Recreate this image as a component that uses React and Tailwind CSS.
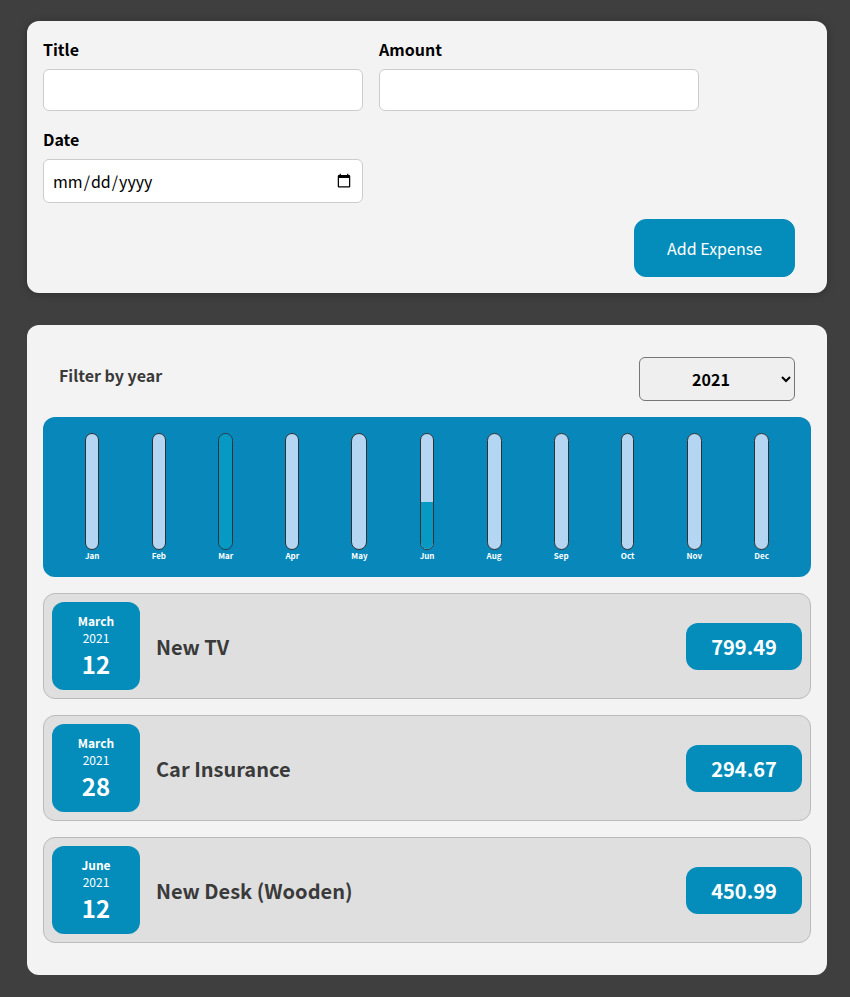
const months = [
  { label: "Jan", fill: 0 },
  { label: "Feb", fill: 0 },
  { label: "Mar", fill: 100 },
  { label: "Apr", fill: 0 },
  { label: "May", fill: 0 },
  { label: "Jun", fill: 41 },
  { label: "Aug", fill: 0 },
  { label: "Sep", fill: 0 },
  { label: "Oct", fill: 0 },
  { label: "Nov", fill: 0 },
  { label: "Dec", fill: 0 },
];

const expenses = [
  { month: "March", year: "2021", day: "12", title: "New TV", amount: "799.49" },
  { month: "March", year: "2021", day: "28", title: "Car Insurance", amount: "294.67" },
  { month: "June", year: "2021", day: "12", title: "New Desk (Wooden)", amount: "450.99" },
];

function Field({ id, label, type, height }) {
  return (
    <div className="w-80">
      <label htmlFor={id} className="mb-2 block text-base font-bold">
        {label}
      </label>
      <input
        id={id}
        type={type}
        className={`${height} block w-full rounded-md border border-[#cccccc] bg-white px-2 text-base`}
      />
    </div>
  );
}

function ExpenseForm() {
  return (
    <form className="rounded-xl bg-[#f3f3f3] p-4 shadow-[0_1px_8px_rgba(0,0,0,0.25)]" onSubmit={(e) => e.preventDefault()}>
      <div className="flex flex-wrap gap-4">
        <Field id="title" label="Title" type="text" height="h-[42px]" />
        <Field id="amount" label="Amount" type="number" height="h-[42px]" />
        <Field id="date" label="Date" type="date" height="h-11" />
      </div>
      <div className="mt-4 flex justify-end pr-4">
        <button type="submit" className="rounded-xl border border-[#048dba] bg-[#048dba] px-8 py-4 text-base text-white">
          Add Expense
        </button>
      </div>
    </form>
  );
}

function Chart() {
  return (
    <div className="flex h-40 justify-around rounded-xl bg-[#0888ba] p-4">
      {months.map((m) => (
        <div key={m.label} className="flex flex-col items-center">
          <div className="flex w-full flex-1 flex-col justify-end overflow-hidden rounded-xl border border-[#313131] bg-[#b4d6f3]">
            <div className="bg-[#0699c4]" style={{ height: `${m.fill}%` }} />
          </div>
          <div className="text-center text-[8px] leading-[11px] font-bold text-white">{m.label}</div>
        </div>
      ))}
    </div>
  );
}

function ExpenseItem({ item }) {
  return (
    <li className="flex items-center gap-4 rounded-xl border border-[#bbbbbb] bg-[#dfdfdf] p-2">
      <div className="flex size-[88px] flex-col items-center justify-center rounded-xl bg-[#048dba] text-white">
        <div className="text-xs leading-[17px] font-bold">{item.month}</div>
        <div className="text-xs leading-[17px]">{item.year}</div>
        <div className="text-2xl leading-[35px] font-bold">{item.day}</div>
      </div>
      <h2 className="flex-1 text-xl leading-[31px] font-bold text-[#3a3a3a]">{item.title}</h2>
      <div className="w-[116px] rounded-xl bg-[#048dba] py-2 text-center text-xl leading-[31px] font-bold text-white">
        {item.amount}
      </div>
    </li>
  );
}

export default function App() {
  return (
    <div className="min-h-screen bg-[#3f3f3f] pt-[21px] pr-[23px] pb-[22px] pl-[27px] font-['Noto_Sans_CJK_JP','Noto_Sans_CJK_SC',sans-serif] text-black">
      <main className="mx-auto flex max-w-[800px] flex-col gap-8">
        <ExpenseForm />
        <section className="rounded-xl bg-[#f3f3f3] px-4 pt-8 pb-8">
          <div className="mb-4 flex items-start justify-between px-4">
            <label htmlFor="year" className="pt-1.5 text-base font-bold text-[#3a3a3a]">
              Filter by year
            </label>
            <select
              id="year"
              defaultValue="2021"
              className="h-11 w-[156px] rounded-md border border-[#767676] bg-[#efefef] text-center text-base font-bold"
            >
              <option>2022</option>
              <option>2021</option>
              <option>2020</option>
              <option>2019</option>
            </select>
          </div>
          <Chart />
          <ul className="mt-4 flex flex-col gap-4">
            {expenses.map((item) => (
              <ExpenseItem key={item.title} item={item} />
            ))}
          </ul>
        </section>
      </main>
    </div>
  );
}
